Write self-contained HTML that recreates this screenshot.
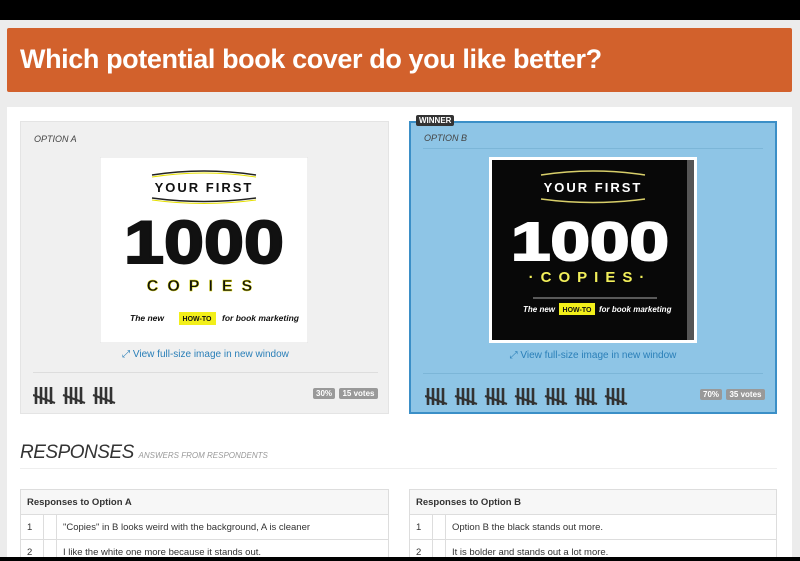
<!DOCTYPE html>
<html><head><meta charset="utf-8"><style>
*{margin:0;padding:0;box-sizing:border-box}
html,body{width:800px;height:561px;overflow:hidden}
body{background:#ececec;font-family:"Liberation Sans",sans-serif;position:relative}
.abs{position:absolute}
.top{left:0;top:0;width:800px;height:20px;background:#000}
.bot{left:0;top:557px;width:800px;height:4px;background:#000}
.hdr{left:7px;top:28px;width:785px;height:64px;background:#d2612c;border-radius:2px;color:#fff;font-weight:bold;font-size:27px;padding:16px 0 0 13px;letter-spacing:-0.4px}
.panel{left:7px;top:107px;width:785px;height:450px;background:#fff}
.opt{top:121px;height:293px}
.optA{left:20px;width:369px;background:#f0f0f0;border:1px solid #e4e4e4}
.optB{left:409px;width:368px;background:#8ec5e6;border:2px solid #3b8fc7}
.lbl{font-size:9px;font-style:italic;color:#444;font-weight:normal}
.link{font-size:10px;color:#2a7fb8}
.badge{font-size:8px;color:#fff;background:#999;border-radius:2px;padding:1px 3px;font-weight:bold}
.winner{left:416px;top:115px;background:#333;color:#fff;font-size:8px;font-weight:bold;padding:1px 3px;border-radius:2px}
.resp{left:20px;top:442px;font-size:19px;font-style:italic;color:#333;letter-spacing:-0.5px}
.resp small{font-size:8px;color:#999;letter-spacing:0}
table{position:absolute;top:489px;border-collapse:collapse;font-size:9.5px;color:#333;background:#fff}
td,th{border:1px solid #ddd;height:25px;text-align:left;padding:0 6px}
th{background:#f7f7f7;font-weight:bold}
</style></head><body>
<div class="abs top"></div>
<div class="abs hdr">Which potential book cover do you like better?</div>
<div class="abs panel"></div>

<div class="abs opt optA">
 <div class="abs lbl" style="left:13px;top:12px">OPTION A</div>
 <svg class="abs" style="left:79px;top:35px" width="208" height="186" viewBox="0 0 208 186">
  <rect width="208" height="186" fill="#fff" stroke="#e2e2e2"/>
  <path d="M52 18 Q104 10 156 18" stroke="#222" stroke-width="1.5" fill="none"/><path d="M52 20 Q104 12 156 20" stroke="#e6e000" stroke-width="1" fill="none"/>
  <text x="104" y="35" text-anchor="middle" font-size="13" font-weight="bold" fill="#111" letter-spacing="2">YOUR FIRST</text>
  <path d="M52 41 Q104 48 156 41" stroke="#222" stroke-width="1.5" fill="none"/><path d="M52 43 Q104 50 156 43" stroke="#e6e000" stroke-width="1" fill="none"/>
  <text x="104" y="106" text-anchor="middle" font-size="60" font-weight="bold" fill="#111" stroke="#111" stroke-width="2" textLength="160" lengthAdjust="spacingAndGlyphs">1000</text>
  <text x="104" y="134" text-anchor="middle" font-size="16" font-weight="bold" fill="#111" letter-spacing="9" stroke="#e6e000" stroke-width="0.4">COPIES</text>
  <text x="30" y="164" font-size="8.5" font-style="italic" font-weight="bold" fill="#111">The new</text>
  <rect x="79" y="155" width="37" height="13" fill="#f2ef1a"/>
  <text x="97" y="164" text-anchor="middle" font-size="7" font-weight="bold" fill="#111">HOW-TO</text>
  <text x="122" y="164" font-size="8.5" font-style="italic" font-weight="bold" fill="#111">for book marketing</text>
 </svg>
 <div class="abs link" style="left:0;width:369px;text-align:center;top:227px">⤢ View full-size image in new window</div>
 <div class="abs" style="left:12px;top:250px;width:345px;border-top:1px solid #ddd"></div>
 <div class="abs" style="left:292px;top:261px"><span class="badge">30%</span> <span class="badge">15 votes</span></div>
 <svg class="abs" style="left:12px;top:264px" width="90" height="20"><g id="t" stroke="#333" stroke-width="2.6"><path d="M3 1v17M8 1v17M13 1v17M18 1v17"/><path d="M0 9 L22 17" stroke-width="2.2"/></g><use href="#t" x="30"/><use href="#t" x="60"/></svg>
</div>

<div class="abs opt optB">
 <div class="abs lbl" style="left:13px;top:10px">OPTION B</div>
 <div class="abs" style="left:12px;top:25px;width:340px;border-top:1px solid #7cb6d8"></div>
 <svg class="abs" style="left:78px;top:34px" width="208" height="186" viewBox="0 0 208 186">
  <rect width="208" height="186" fill="#fff"/>
  <rect x="3" y="3" width="202" height="180" fill="#080808"/>
  <rect x="198" y="3" width="7" height="180" fill="#555"/>
  <path d="M52 18 Q104 10 156 18" stroke="#d8cf6a" stroke-width="1.5" fill="none"/>
  <text x="104" y="35" text-anchor="middle" font-size="13" font-weight="bold" fill="#fff" letter-spacing="2">YOUR FIRST</text>
  <path d="M52 42 Q104 49 156 42" stroke="#d8cf6a" stroke-width="1.5" fill="none"/>
  <text x="101" y="103" text-anchor="middle" font-size="54" font-weight="bold" fill="#fff" stroke="#fff" stroke-width="2" textLength="158" lengthAdjust="spacingAndGlyphs">1000</text>
  <text x="101" y="125" text-anchor="middle" font-size="15" font-weight="bold" fill="#f2ef5a" letter-spacing="7">·COPIES·</text>
  <path d="M44 141 H168" stroke="#aaa" stroke-width="1"/>
  <text x="34" y="155" font-size="8" font-style="italic" font-weight="bold" fill="#fff">The new</text>
  <rect x="70" y="146" width="36" height="12" fill="#f2ef1a"/>
  <text x="88" y="155" text-anchor="middle" font-size="7" font-weight="bold" fill="#111">HOW-TO</text>
  <text x="110" y="155" font-size="8" font-style="italic" font-weight="bold" fill="#fff">for book marketing</text>
 </svg>
 <div class="abs link" style="left:0;width:364px;text-align:center;top:227px">⤢ View full-size image in new window</div>
 <div class="abs" style="left:12px;top:250px;width:340px;border-top:1px solid #7cb6d8"></div>
 <div class="abs" style="left:289px;top:261px"><span class="badge">70%</span> <span class="badge">35 votes</span></div>
 <svg class="abs" style="left:14px;top:264px" width="210" height="20"><g id="t2" stroke="#333" stroke-width="2.6"><path d="M3 1v17M8 1v17M13 1v17M18 1v17"/><path d="M0 9 L22 17" stroke-width="2.2"/></g><use href="#t2" x="30"/><use href="#t2" x="60"/><use href="#t2" x="90"/><use href="#t2" x="120"/><use href="#t2" x="150"/><use href="#t2" x="180"/></svg>
</div>
<div class="abs winner">WINNER</div>

<div class="abs resp">RESPONSES <small>ANSWERS FROM RESPONDENTS</small></div>
<div class="abs" style="left:20px;top:468px;width:757px;border-top:1px solid #eee"></div>

<table style="left:20px;width:369px">
<tr><th colspan="3">Responses to Option A</th></tr>
<tr><td style="width:23px">1</td><td style="width:13px"></td><td>"Copies" in B looks weird with the background, A is cleaner</td></tr>
<tr><td>2</td><td></td><td>I like the white one more because it stands out.</td></tr>
</table>
<table style="left:409px;width:368px">
<tr><th colspan="3">Responses to Option B</th></tr>
<tr><td style="width:23px">1</td><td style="width:13px"></td><td>Option B the black stands out more.</td></tr>
<tr><td>2</td><td></td><td>It is bolder and stands out a lot more.</td></tr>
</table>
<div class="abs bot"></div>
</body></html>
